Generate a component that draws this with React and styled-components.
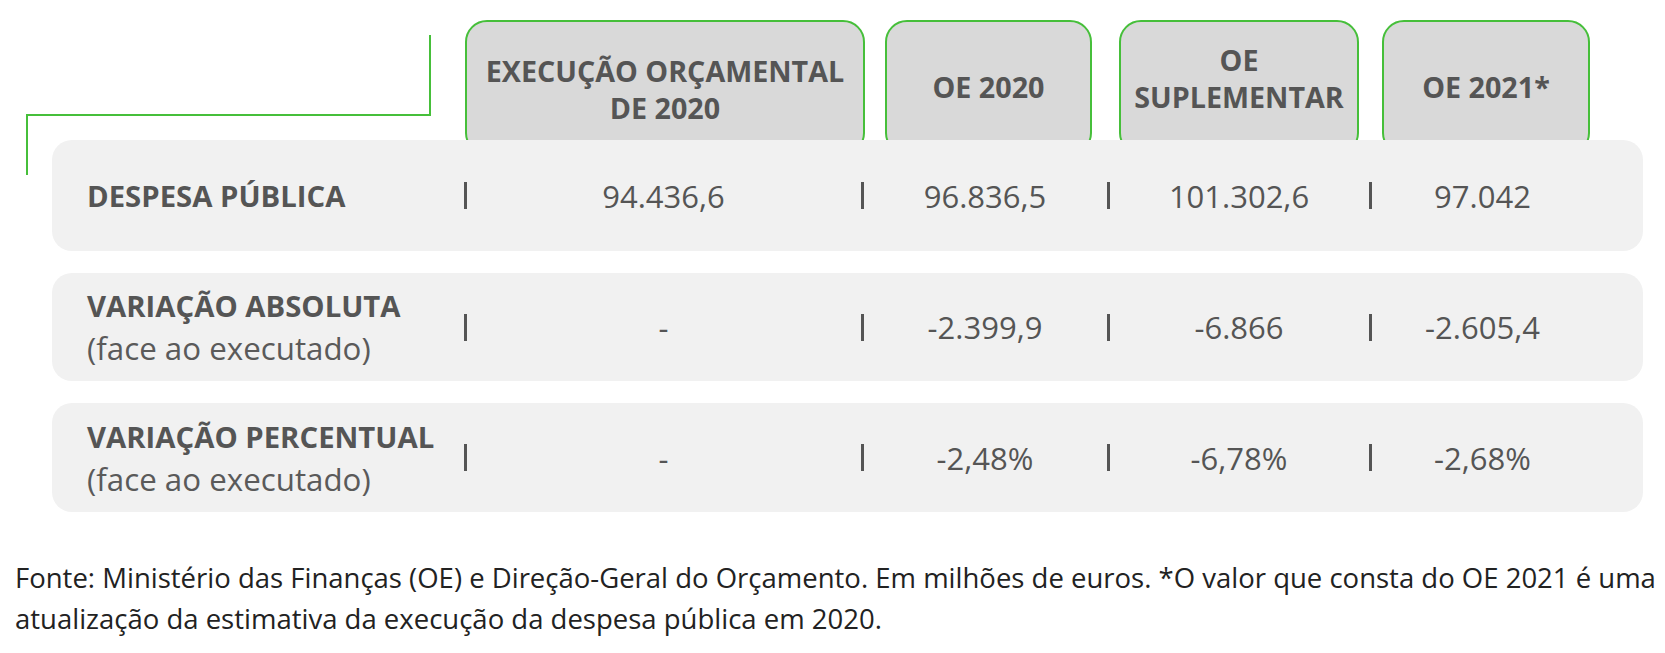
import React from 'react';
import styled, { createGlobalStyle } from 'styled-components';

const GlobalStyle = createGlobalStyle`
  html, body {
    margin: 0;
    padding: 0;
    background: #ffffff;
  }
  body {
    font-family: "Open Sans", "Noto Sans", "Liberation Sans", sans-serif;
    color: #555555;
  }
`;

const GREEN = '#46bf3a';

const Page = styled.div`
  width: 1665px;
  padding-top: 20px;
  box-sizing: border-box;
`;

const Header = styled.div`
  display: flex;
  align-items: flex-start;
  height: 120px;
`;

const Bracket = styled.div`
  width: 465px;
  flex-shrink: 0;
  height: 160px;

  svg {
    display: block;
    overflow: visible;
  }
`;

const HeadCard = styled.div`
  flex-shrink: 0;
  width: ${(p) => p.$w}px;
  margin-left: ${(p) => p.$ml || 0}px;
  height: 135px;
  box-sizing: border-box;
  padding-top: ${(p) => p.$pt}px;
  background: #d9d9d9;
  border: 2px solid ${GREEN};
  border-radius: 22px;
  text-align: center;
  font-weight: 700;
  font-size: 28.7px;
  line-height: 37px;
  color: #555555;
  white-space: nowrap;
`;

const Table = styled.div`
  position: relative;
  z-index: 1;
  margin-left: 52px;
  width: 1591px;
  display: flex;
  flex-direction: column;
  gap: 22px;
`;

const Row = styled.div`
  display: grid;
  grid-template-columns: 373px 10px 387px 10px 236px 10px 252px 10px 215px;
  align-items: center;
  height: ${(p) => p.$h || 110}px;
  padding-left: 35px;
  box-sizing: border-box;
  background: #f1f1f1;
  border-radius: 20px;
`;

const Label = styled.div`
  font-weight: 700;
  font-size: 29.3px;
  line-height: 42px;
  color: #555555;
  white-space: nowrap;
`;

const SubLabel = styled.div`
  font-weight: 400;
  font-size: 31.3px;
  line-height: 42px;
  color: #5a5a5a;
  white-space: nowrap;
`;

const Sep = styled.div`
  justify-self: center;
  width: 3px;
  height: 27px;
  background: #555555;
`;

const Value = styled.div`
  text-align: center;
  font-size: 31px;
  color: #555555;
`;

const Note = styled.p`
  margin: 45px 0 0 15px;
  font-size: 27.5px;
  line-height: 41px;
  color: #222222;
  white-space: nowrap;
`;

const heads = [
  { w: 400, ml: 0, pt: 30, text: ['EXECUÇÃO ORÇAMENTAL', 'DE 2020'] },
  { w: 207, ml: 20, pt: 46, text: ['OE 2020'] },
  { w: 240, ml: 27, pt: 19, text: ['OE', 'SUPLEMENTAR'] },
  { w: 208, ml: 23, pt: 46, text: ['OE 2021*'] },
];

const rows = [
  { label: 'DESPESA PÚBLICA', h: 111, values: ['94.436,6', '96.836,5', '101.302,6', '97.042'] },
  { label: 'VARIAÇÃO ABSOLUTA', sub: '(face ao executado)', h: 108, values: ['-', '-2.399,9', '-6.866', '-2.605,4'] },
  { label: 'VARIAÇÃO PERCENTUAL', sub: '(face ao executado)', h: 109, values: ['-', '-2,48%', '-6,78%', '-2,68%'] },
];

export default function App() {
  return (
    <Page>
      <GlobalStyle />
      <Header>
        <Bracket>
          <svg width="465" height="160" viewBox="0 0 465 160">
            <polyline
              points="430,15 430,95 27,95 27,155"
              fill="none"
              stroke={GREEN}
              strokeWidth="2"
            />
          </svg>
        </Bracket>
        {heads.map((h) => (
          <HeadCard key={h.text.join()} $w={h.w} $ml={h.ml} $pt={h.pt}>
            {h.text.map((t) => (
              <div key={t}>{t}</div>
            ))}
          </HeadCard>
        ))}
      </Header>

      <Table>
        {rows.map((r) => (
          <Row key={r.label} $h={r.h}>
            <div>
              <Label>{r.label}</Label>
              {r.sub && <SubLabel>{r.sub}</SubLabel>}
            </div>
            {r.values.map((v, i) => (
              <React.Fragment key={i}>
                <Sep />
                <Value>{v}</Value>
              </React.Fragment>
            ))}
          </Row>
        ))}
      </Table>

      <Note>
        Fonte: Ministério das Finanças (OE) e Direção-Geral do Orçamento. Em milhões de euros. *O valor que consta do OE 2021 é uma
        <br />
        atualização da estimativa da execução da despesa pública em 2020.
      </Note>
    </Page>
  );
}
